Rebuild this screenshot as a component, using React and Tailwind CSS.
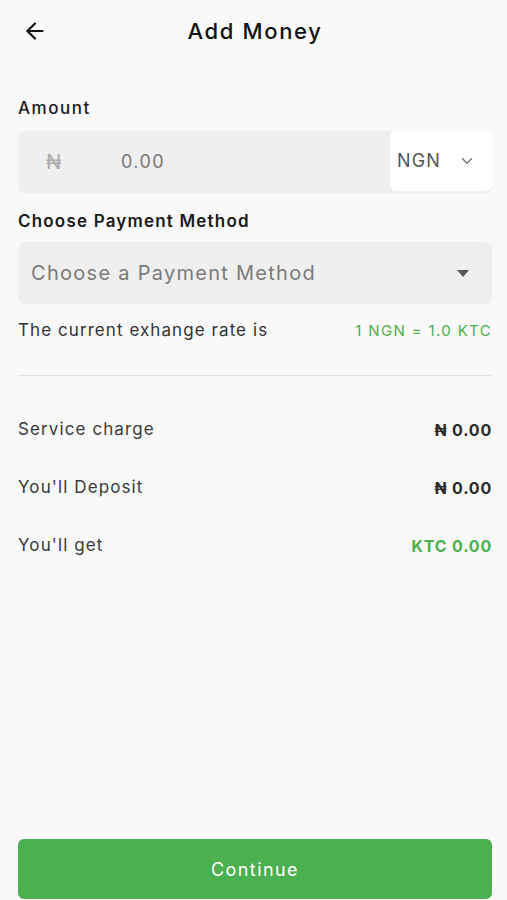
import { ArrowLeft, ChevronDown } from 'lucide-react';

const font = { fontFamily: 'Inter, "Noto Sans", sans-serif' };

function Row({ label, value, green }) {
  return (
    <div className="flex items-center justify-between h-[58px]">
      <span className="text-[17px] tracking-[0.065em] text-[#3a3a3a]">{label}</span>
      <span className={`text-[16px] font-bold tracking-[0.05em] ${green ? 'text-[#4caf50]' : 'text-[#2a2a2a]'}`}>{value}</span>
    </div>
  );
}

export default function App() {
  return (
    <div style={font} className="w-[507px] h-[900px] bg-[#f9f9f9] flex flex-col pl-[18px] pr-[15px] overflow-hidden">
      <header className="relative h-[62px] flex items-center justify-center">
        <button className="absolute left-[4px] top-[18px] text-[#111]">
          <ArrowLeft size={26} strokeWidth={2} />
        </button>
        <h1 className="text-[22px] font-medium text-[#111] tracking-[0.075em]">Add Money</h1>
      </header>

      <label className="mt-[34px] text-[17px] font-medium tracking-[0.09em] text-[#1a1a1a]">Amount</label>
      <div className="mt-[9px] h-[62px] rounded-[6px] bg-[#efefef] flex items-center">
        <span className="w-[78px] pl-[28px] text-[20px] text-[#ababab]">₦</span>
        <span className="flex-1 pl-[25px] text-[18px] tracking-[0.08em] text-[#777]">0.00</span>
        <div className="h-[60px] w-[102px] self-start bg-white rounded-[6px] flex items-center justify-between pl-[7px] pr-[16px]">
          <span className="text-[18px] tracking-[0.06em] text-[#555]">NGN</span>
          <ChevronDown size={18} className="text-[#777]" />
        </div>
      </div>

      <label className="mt-[16px] text-[17px] font-semibold tracking-[0.07em] text-[#1a1a1a]">Choose Payment Method</label>
      <div className="mt-[8px] h-[62px] rounded-[6px] bg-[#efefef] flex items-center justify-between pl-[13px] pr-[23px]">
        <span className="text-[20px] tracking-[0.064em] text-[#7a7a7a]">Choose a Payment Method</span>
        <svg width="12" height="7" viewBox="0 0 12 7"><path d="M0 0h12L6 7z" fill="#555" /></svg>
      </div>

      <div className="mt-[14px] flex items-center justify-between">
        <span className="text-[17px] tracking-[0.063em] text-[#333]">The current exhange rate is</span>
        <span className="text-[15px] tracking-[0.09em] text-[#4caf50]">1 NGN = 1.0 KTC</span>
      </div>

      <div className="mt-[31px] h-px bg-[#e3e3e3]" />

      <div className="mt-[25px]">
        <Row label="Service charge" value="₦ 0.00" />
        <Row label="You'll Deposit" value="₦ 0.00" />
        <Row label="You'll get" value="KTC 0.00" green />
      </div>

      <button className="mt-auto mb-[1px] h-[60px] rounded-[6px] bg-[#4caf50] text-white text-[18px] tracking-[0.08em]">
        Continue
      </button>
    </div>
  );
}
